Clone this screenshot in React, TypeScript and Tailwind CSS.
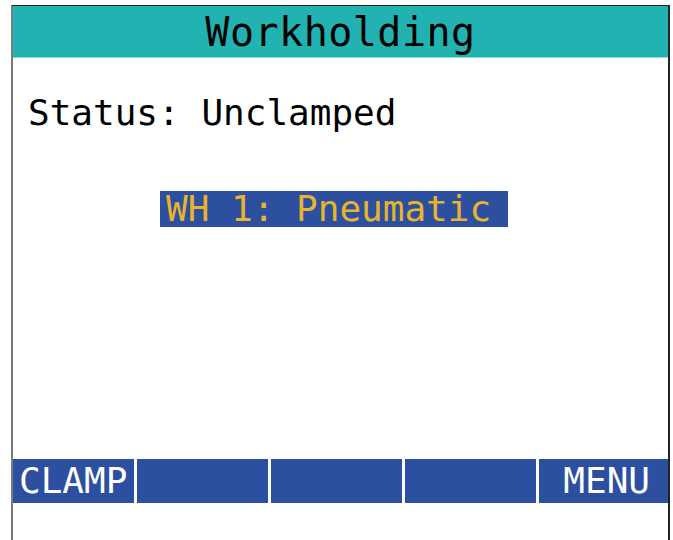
export default function App() {
  const mono = { fontFamily: '"DejaVu Sans Mono", "Liberation Mono", monospace' };
  return (
    <div className="w-[673px] h-[540px] bg-white overflow-hidden" style={mono}>
      <div className="ml-[11px] mt-[5px] w-[659px] h-[535px] border-l-2 border-l-[#7a7a7a] border-t border-t-[#222] border-r-2 border-r-[#222] flex flex-col">
        <div className="h-[52px] bg-[#22b2b2] border-b border-b-[#8edcdc] flex items-center justify-center">
          <span className="text-[40px] leading-none text-black tracking-[0.5px]">Workholding</span>
        </div>
        <div className="h-[401px] flex flex-col">
          <div className="pl-[15px] pt-[37px] text-[36px] leading-none text-black">Status: Unclamped</div>
          <div className="pl-[147px] pt-[60px]">
            <span className="inline-block bg-[#2c4fa0] text-[#e8b42c] text-[36px] leading-[36px] pl-[6px] w-[348px] whitespace-pre">WH 1: Pneumatic</span>
          </div>
        </div>
        <div className="h-[44px] flex gap-[3px] text-white text-[36px] leading-none">
          <div className="w-[121px] bg-[#2c4fa0] flex items-center pl-[6px]">CLAMP</div>
          <div className="w-[131px] bg-[#2c4fa0]"></div>
          <div className="w-[131px] bg-[#2c4fa0]"></div>
          <div className="w-[131px] bg-[#2c4fa0]"></div>
          <div className="flex-1 bg-[#2c4fa0] flex items-center justify-end pr-[18px]">MENU</div>
        </div>
      </div>
    </div>
  );
}
